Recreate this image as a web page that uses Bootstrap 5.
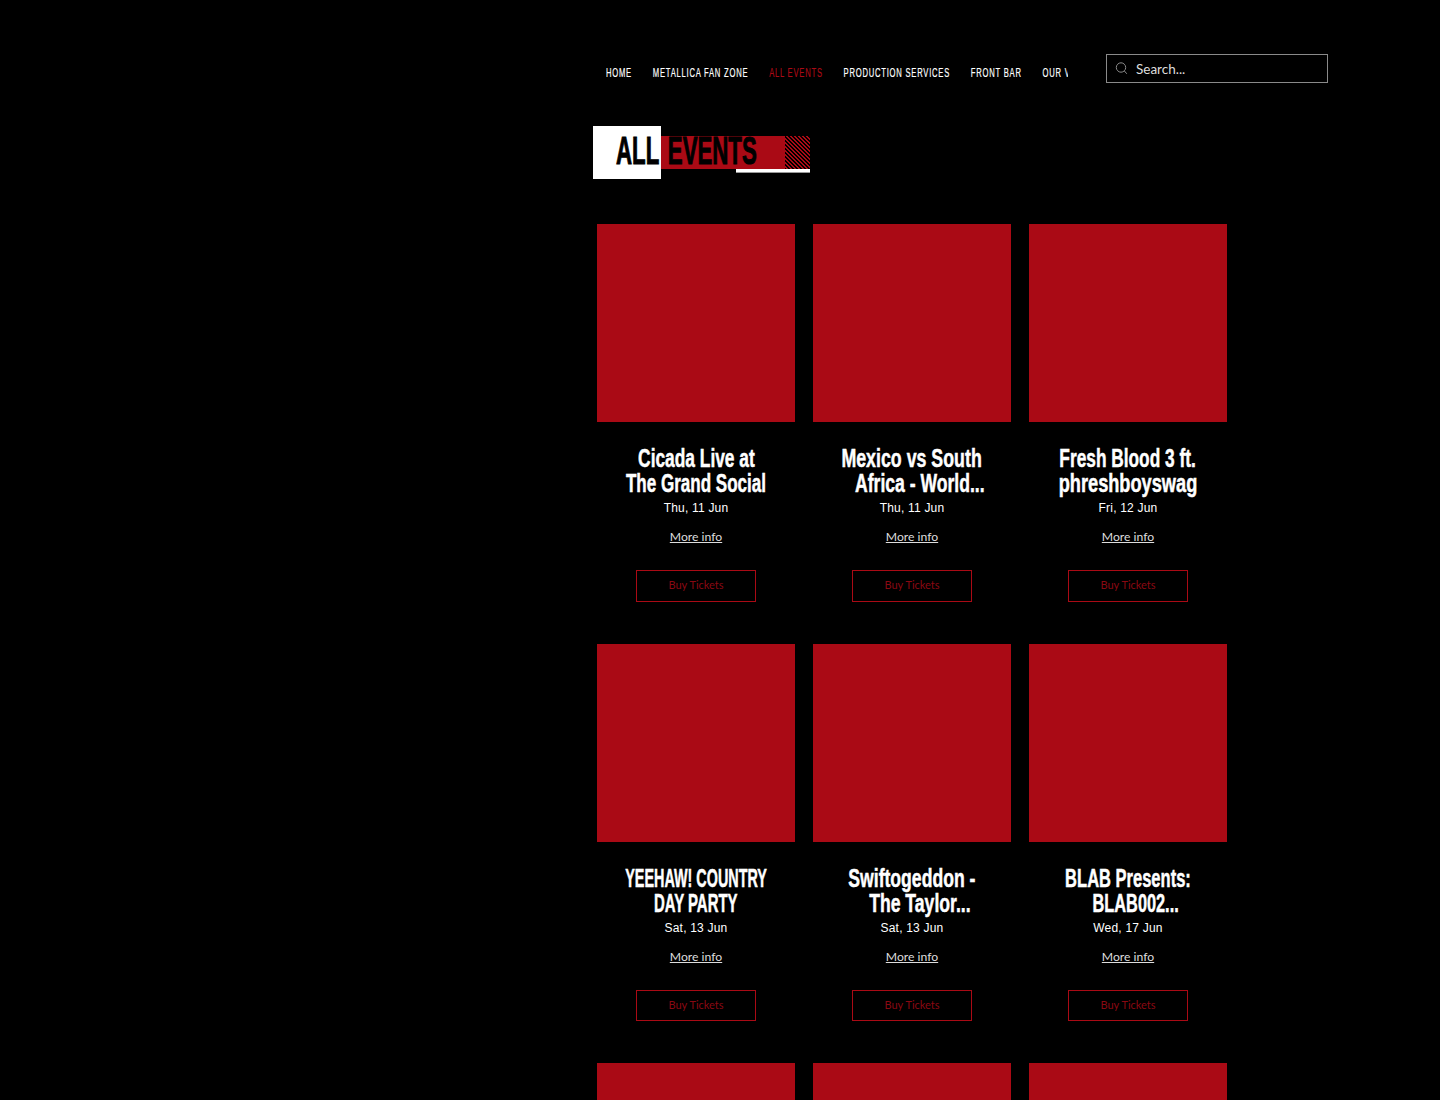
<!DOCTYPE html>
<html lang="en">
<head>
  <meta charset="UTF-8" />
  <meta name="viewport" content="width=device-width, initial-scale=1.0" />
  <title>All Events</title>
  <link href="https://cdn.jsdelivr.net/npm/bootstrap@5.3.0/dist/css/bootstrap.min.css" rel="stylesheet" />
  <style>
    html, body { height: 1100px; overflow: hidden; background: #000; }
    .site-wrap { width: 1440px; height: 1100px; overflow: hidden; padding-left: 593px; }
    .top-row { height: 126px; padding-top: 54px; }
    .main-menu { width: 475px; height: 29px; padding-left: 13.4px; padding-top: 12px; overflow: hidden; }
    /* the menu font is condensed, no such font here so squeeze the whole strip */
    .menu-strip { width: max-content; gap: 34.2px; transform: scaleX(0.61); transform-origin: left center; }
    .menu-strip a { font: 400 12.5px/14px "Liberation Sans", sans-serif; letter-spacing: 1.26px; color: #fff; -webkit-text-stroke: .2px currentColor; text-decoration: none; white-space: nowrap; }
    .menu-strip a.is-on { color: #aa0a15; }
    .search-box { width: 222px; height: 29px; margin-left: 38px; border: 1px solid #8a8a8a; padding-left: 8px; gap: 8px; }
    .search-box span { font: 13.5px/1 "Lato", sans-serif; color: #ddd; position: relative; top: 1px; }
    .title-wrap { position: relative; width: 217px; height: 53px; }
    .title-white { width: 68px; height: 53px; background: #fff; }
    .title-red { width: 149px; height: 33px; margin-top: 10px; background: #aa0a15; position: relative; }
    .title-hatch { position: absolute; right: 0; top: 0; width: 25px; height: 33px; background: repeating-linear-gradient(45deg, #000 0 1.4px, #aa0a15 1.4px 2.8px); }
    .title-line { position: absolute; right: 0; top: 43px; width: 74px; height: 4px; background: #fff; border-bottom: 1px solid #999; }
    .title-text { position: absolute; left: 23px; top: 2px; font: 700 39px/46px "Liberation Sans", sans-serif; word-spacing: 5px; color: #000; white-space: nowrap; -webkit-text-stroke: 1px #000; transform: scaleX(0.57); transform-origin: left center; }
    .event-grid { display: grid; grid-template-columns: repeat(3, 198px); column-gap: 18px; row-gap: 0; margin: 45px 0 0 4px; width: 630px; }
    .event-item { height: 419.5px; text-align: center; }
    .event-pic { height: 198px; background: #aa0a15; }
    .event-name { margin-top: 24px; font: 700 26px/25px "Liberation Sans", sans-serif; color: #fff; -webkit-text-stroke: 0.5px #fff; }
    .event-name span { white-space: nowrap; }
    .event-name .cut-line { margin-left: 15px; }
    .event-date { font: 12px/18px "Liberation Sans", sans-serif; letter-spacing: .2px; color: #fff; margin-top: 3px; }
    .event-more { display: block; margin-top: 11px; font: 12.2px/18px "Lato", sans-serif; color: #ddd; }
    .event-buy { display: block; width: 120px; height: 31.6px; margin: 24px auto 0; border: 1px solid #aa0a15; border-radius: 0; padding: 0; font: 11px/28px "Lato", sans-serif; color: #8a0812; }
  </style>
</head>
<body>
<div class="site-wrap">
  <!-- header -->
  <div class="top-row d-flex align-items-start">
    <nav class="main-menu">
      <div class="menu-strip d-flex flex-nowrap">
        <a href="#">HOME</a>
        <a href="#">METALLICA FAN ZONE</a>
        <a href="#" class="is-on">ALL EVENTS</a>
        <a href="#">PRODUCTION SERVICES</a>
        <a href="#">FRONT BAR</a>
        <a href="#">OUR VENUE</a>
      </div>
    </nav>
    <div class="search-box d-flex align-items-center">
      <svg width="13" height="13" viewBox="0 0 13 13" fill="none" stroke="#8a8a8a" stroke-width="1"><circle cx="6" cy="5.5" r="4.7"/><path d="M9.4 9 11.8 11.8"/></svg>
      <span>Search...</span>
    </div>
  </div>

  <!-- title -->
  <div class="title-wrap d-flex">
    <div class="title-white"></div>
    <div class="title-red"><div class="title-hatch"></div></div>
    <div class="title-line"></div>
    <div class="title-text">ALL EVENTS</div>
  </div>

  <!-- events -->
  <div class="event-grid" id="events"></div>
</div>

<script>
// each line: text and horizontal squeeze, since the heading font is not installed
const events = [
  [["Cicada Live at", .667], ["The Grand Social", .655], "Thu, 11 Jun", false],
  [["Mexico vs South", .684], ["Africa - World...", .676], "Thu, 11 Jun", true],
  [["Fresh Blood 3 ft.", .665], ["phreshboyswag", .70], "Fri, 12 Jun", false],
  [["YEEHAW! COUNTRY", .553], ["DAY PARTY", .575], "Sat, 13 Jun", false],
  [["Swiftogeddon -", .677], ["The Taylor...", .677], "Sat, 13 Jun", true],
  [["BLAB Presents:", .635], ["BLAB002...", .628], "Wed, 17 Jun", true],
  [], [], []
];
document.getElementById("events").innerHTML = events.map(e => `
  <div class="event-item">
    <div class="event-pic"></div>
    ${e[0] ? `<div class="event-name d-flex flex-column align-items-center"><span style="transform: scaleX(${e[0][1]})">${e[0][0]}</span><span class="${e[3] ? 'cut-line' : ''}" style="transform: scaleX(${e[1][1]})">${e[1][0]}</span></div>
    <div class="event-date">${e[2]}</div>
    <a href="#" class="event-more">More info</a>
    <a href="#" class="event-buy btn">Buy Tickets</a>` : ''}
  </div>`).join('');
</script>
<script src="https://cdn.jsdelivr.net/npm/bootstrap@5.3.0/dist/js/bootstrap.bundle.min.js"></script>
</body>
</html>
